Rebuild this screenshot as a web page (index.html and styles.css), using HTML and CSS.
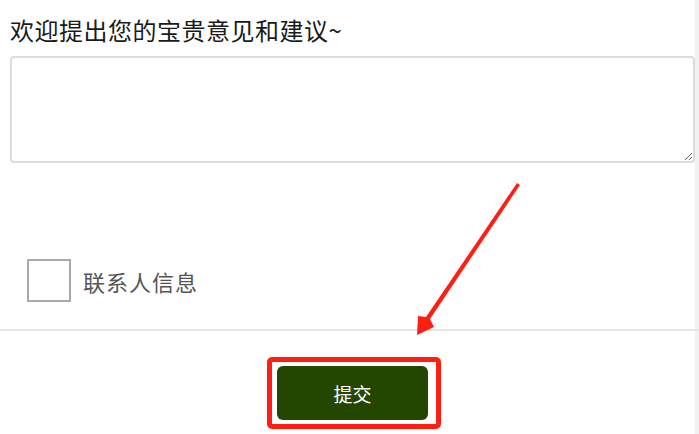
FILE: index.html
```html
<!DOCTYPE html>
<html lang="zh-CN">
<head>
  <meta charset="UTF-8" />
  <meta name="viewport" content="width=device-width, initial-scale=1.0"/>
  <title>意见反馈</title>
  <link rel="stylesheet" href="styles.css">
</head>
<body>
  <div class="form">
    <label class="title" for="advice">欢迎提出您的宝贵意见和建议~</label>
    <textarea id="advice" class="advice"></textarea>

    <label class="contact">
      <span class="box"></span>
      <span>联系人信息</span>
    </label>
  </div>

  <div class="footer">
    <div class="mark">
      <button class="submit">提交</button>
    </div>
  </div>

  <svg class="arrow" width="699" height="434" viewBox="0 0 699 434">
    <polygon fill="#ff1e12" points="517,183 520,185 430,319 434,327 417,335 418,316 426,317"/>
  </svg>
</body>
</html>
```

FILE: styles.css
```css
body {
  margin: 0;
  background: #fff;
  box-shadow: inset -4px 0 0 #f1f1f1;
  min-height: 434px;
  font-family: "Noto Sans CJK SC", "Noto Sans", sans-serif;
  color: #222;
  position: relative;
  overflow: hidden;
}
.form {
  padding: 14px 4px 0 10px;
}
.title {
  display: block;
  font-size: 24px;
  line-height: 32px;
  color: #1a1a1a;
  letter-spacing: 0.5px;
}
.advice {
  display: block;
  box-sizing: border-box;
  width: 100%;
  height: 107px;
  margin-top: 10px;
  border: 2px solid #dcdcdc;
  border-radius: 4px;
  resize: vertical;
}
.contact {
  display: flex;
  align-items: center;
  gap: 12px;
  margin: 96px 0 0 17px;
  font-size: 22px;
  letter-spacing: 1px;
  color: #555;
}
.box {
  width: 40px;
  height: 39px;
  border: 2px solid #aaa;
}
.footer {
  margin-top: 27px;
  border-top: 2px solid #e6e6e6;
  display: flex;
  justify-content: center;
  padding-top: 26px;
}
.mark {
  border: 5px solid #ff1e12;
  border-radius: 5px;
  padding: 4px 8px 4px 5px;
  margin-left: 9px;
}
.submit {
  display: block;
  width: 151px;
  height: 54px;
  border: none;
  border-radius: 6px;
  background: #234700;
  color: #fff;
  font-family: "Noto Sans CJK SC", sans-serif;
  font-size: 19px;
}
.arrow {
  position: absolute;
  left: 0;
  top: 0;
  pointer-events: none;
}
```
